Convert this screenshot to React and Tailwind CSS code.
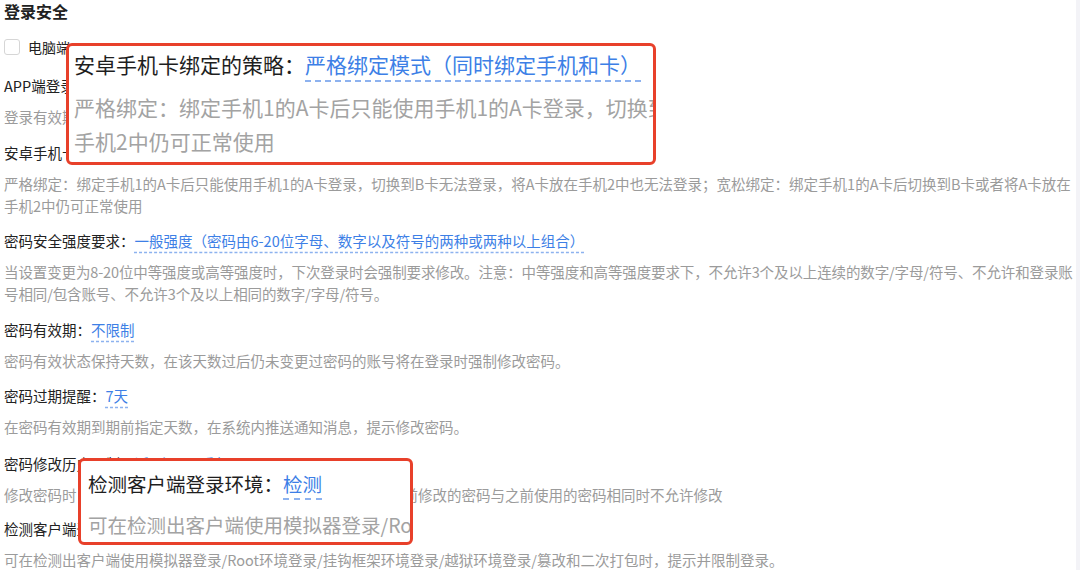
import React from 'react';

const font = { fontFamily: '"Noto Sans CJK SC", "Noto Sans", sans-serif' };

const items = [
  {
    label: 'APP端登录有效期：',
    value: '30天',
    desc: ['登录有效期内，用户在APP端无需重复登录，超过有效期后需要重新登录。'],
  },
  {
    label: '安卓手机卡绑定的策略：',
    value: '严格绑定模式（同时绑定手机和卡）',
    desc: [
      '严格绑定：绑定手机1的A卡后只能使用手机1的A卡登录，切换到B卡无法登录，将A卡放在手机2中也无法登录；宽松绑定：绑定手机1的A卡后切换到B卡或者将A卡放在',
      '手机2中仍可正常使用',
    ],
    lift: true,
  },
  {
    label: '密码安全强度要求：',
    value: '一般强度（密码由6-20位字母、数字以及符号的两种或两种以上组合）',
    desc: [
      '当设置变更为8-20位中等强度或高等强度时，下次登录时会强制要求修改。注意：中等强度和高等强度要求下，不允许3个及以上连续的数字/字母/符号、不允许和登录账',
      '号相同/包含账号、不允许3个及以上相同的数字/字母/符号。',
    ],
    tight: true,
  },
  {
    label: '密码有效期：',
    value: '不限制',
    desc: ['密码有效状态保持天数，在该天数过后仍未变更过密码的账号将在登录时强制修改密码。'],
  },
  {
    label: '密码过期提醒：',
    value: '7天',
    desc: ['在密码有效期到期前指定天数，在系统内推送通知消息，提示修改密码。'],
  },
  {
    label: '密码修改历史限制：',
    value: '近3次不可重复',
    desc: ['修改密码时，若与近5次修改历史中任意一次相同则提示，即当前修改的密码与之前使用的密码相同时不允许修改'],
    shift: true,
  },
  {
    label: '检测客户端登录环境：',
    value: '检测',
    desc: ['可在检测出客户端使用模拟器登录/Root环境登录/挂钩框架环境登录/越狱环境登录/篡改和二次打包时，提示并限制登录。'],
  },
];

const Link = ({ children, className = '' }) => (
  <span
    className={`text-[#3d7fe6] underline decoration-dashed decoration-[#8db2ef] ${className || 'underline-offset-[5px]'}`}
  >
    {children}
  </span>
);

const Setting = ({ item }) => (
  <div className={item.shift ? 'mb-[12px] pt-[1.5px]' : 'mb-[13.5px]'}>
    <div className="h-[22px] leading-[22px] whitespace-nowrap text-[#222]">
      {item.label}
      <Link className={item.lift ? 'underline-offset-[2px]' : ''}>{item.value}</Link>
    </div>
    <div className={`mt-[9px] text-[#9b9b9b] ${item.tight ? 'tracking-[-0.12px]' : ''}`}>
      {item.desc.map((line, i) => (
        <div key={i} className="h-[22px] leading-[22px] whitespace-nowrap">
          {line}
        </div>
      ))}
    </div>
  </div>
);

const App = () => {
  return (
    <div className="relative flex h-[570px] w-[1080px] overflow-hidden bg-white" style={font}>
      <div className="flex-1 pl-[4px] text-[14.5px]">
        <h1 className="h-[22px] text-[16px] font-bold leading-[22px] text-[#222]">登录安全</h1>

        <div className="mt-[17px] flex h-[16px] items-center">
          <span className="h-[16px] w-[16px] rounded-[3px] border border-[#d6d6d6] bg-white"></span>
          <span className="ml-[8px] text-[14px] text-[#222]">电脑端</span>
        </div>

        <div className="mt-[20px]">
          {items.map((item) => (
            <Setting key={item.label} item={item} />
          ))}
        </div>
      </div>

      {/* scrollbar track */}
      <div className="w-[4px] bg-[#f3f3f7]"></div>

      {/* magnified callout 1 */}
      <div className="absolute left-[66px] top-[43px] h-[122px] w-[590px] overflow-hidden rounded-[6px] border-[3px] border-[#e8402a] bg-white pl-[5px] pt-[3px]">
        <div className="h-[30px] whitespace-nowrap text-[21px] leading-[30px] text-[#1e1e1e]">
          安卓手机卡绑定的策略：
          <Link className="decoration-[1.5px] underline-offset-[7px]">严格绑定模式（同时绑定手机和卡）</Link>
        </div>
        <div className="mt-[11px] text-[21px] leading-[34px] text-[#a3a3a3]">
          <div className="whitespace-nowrap">严格绑定：绑定手机1的A卡后只能使用手机1的A卡登录，切换到B卡无法登录</div>
          <div className="whitespace-nowrap">手机2中仍可正常使用</div>
        </div>
      </div>

      {/* magnified callout 2 */}
      <div className="absolute left-[78px] top-[458px] h-[87px] w-[335px] overflow-hidden rounded-[6px] border-[3px] border-[#e8402a] bg-white pl-[7px] pt-[9px]">
        <div className="h-[28px] whitespace-nowrap text-[19.5px] leading-[28px] text-[#1e1e1e]">
          检测客户端登录环境：
          <Link className="decoration-[1.5px] underline-offset-[6px]">检测</Link>
        </div>
        <div className="mt-[13px] h-[28px] whitespace-nowrap text-[19.5px] leading-[28px] text-[#a3a3a3]">
          可在检测出客户端使用模拟器登录/Root环境登录
        </div>
      </div>
    </div>
  );
};

export default App;
